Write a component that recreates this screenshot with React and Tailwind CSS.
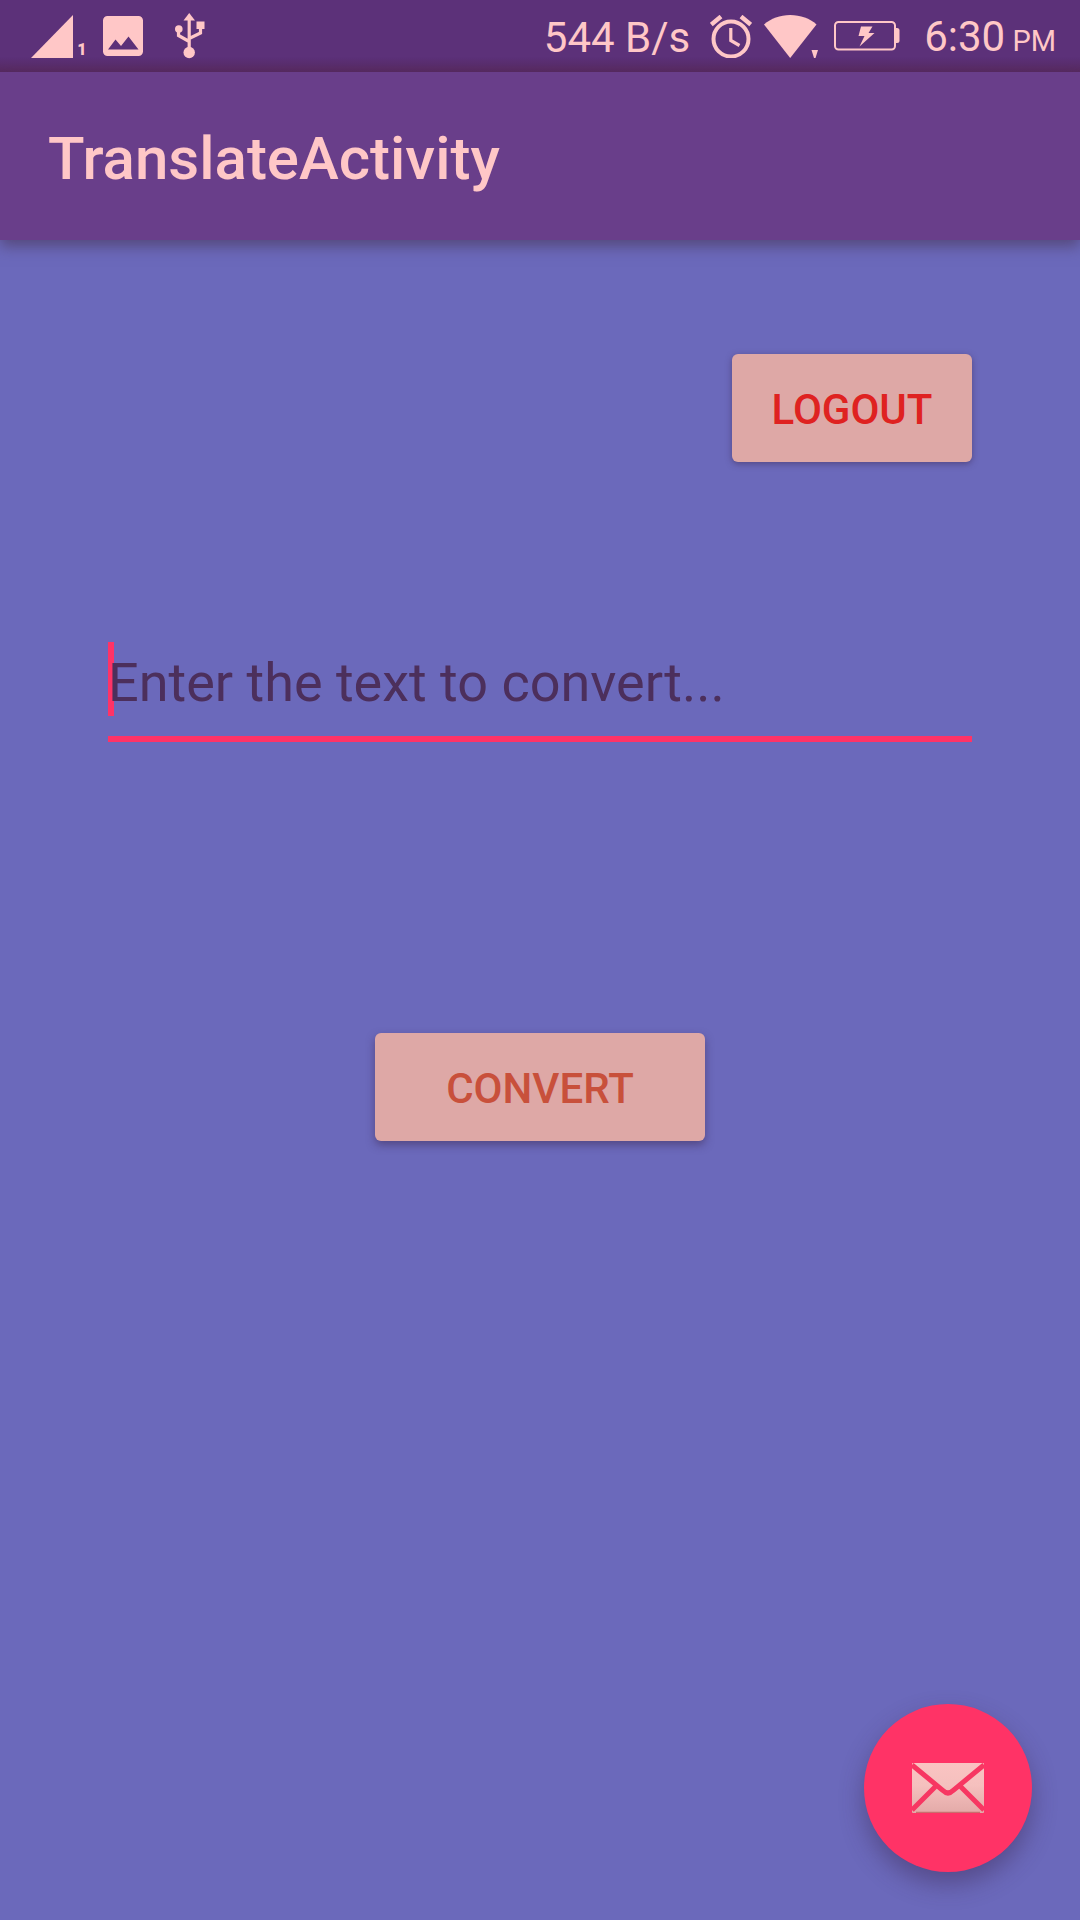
import React from "react";

function SignalIcon() {
  return (
    <svg className="h-[43px] w-[42px] shrink-0" viewBox="0 0 42 43" fill="currentColor" aria-hidden="true">
      <path d="M42 0V43H0Z" />
    </svg>
  );
}

function PictureIcon() {
  return (
    <svg className="h-10 w-10 shrink-0" viewBox="0 0 40 40" fill="currentColor" aria-hidden="true">
      <path
        fillRule="evenodd"
        d="M4.5 0h31A4.5 4.5 0 0 1 40 4.5v31a4.5 4.5 0 0 1-4.5 4.5h-31A4.5 4.5 0 0 1 0 35.500v-31A4.5 4.5 0 0 1 4.500 0ZM5 33.500H35.500L25.500 20.500L18 30L12.500 23.500Z"
      />
    </svg>
  );
}

function UsbIcon() {
  return (
    <svg className="h-[46px] w-[30px] shrink-0" viewBox="0 0 30 46" fill="none" stroke="currentColor" aria-hidden="true">
      <path d="M14.200 5V40M3.500 16V22.500L14.200 28.500M25.500 14V20L14.200 25.500" strokeWidth="3.200" />
      <g fill="currentColor" stroke="none">
        <path d="M14.200 0L20 7.500H8.500Z" />
        <circle cx="3.800" cy="16" r="3.800" />
        <rect x="21.500" y="8.500" width="8" height="7.500" />
        <circle cx="14.200" cy="39.500" r="5.700" />
      </g>
    </svg>
  );
}

function AlarmIcon() {
  return (
    <svg className="h-[43px] w-[42px] shrink-0" viewBox="0 0 42 43" fill="none" stroke="currentColor" aria-hidden="true">
      <circle cx="21" cy="24" r="17.500" strokeWidth="4" />
      <path d="M20.800 13V25.500L29.500 30.500" strokeWidth="3.200" />
      <path d="M1.300 9.500L11 1.500M31 1.500L40.700 9.500" strokeWidth="4.400" />
    </svg>
  );
}

function WifiIcon() {
  return (
    <svg className="h-[43px] w-[54px] shrink-0" viewBox="0 0 54 43" fill="currentColor" aria-hidden="true">
      <path d="M0 9.500C7 3.500 16 0 26.200 0S46 3.500 52.500 9.500L26.200 43Z" />
      <path d="M47.500 35H54L51.500 43H50Z" />
    </svg>
  );
}

function BatteryIcon() {
  return (
    <svg className="h-[30px] w-[66px] shrink-0" viewBox="0 0 66 30" fill="none" aria-hidden="true">
      <rect x="1" y="1" width="60" height="27.500" rx="3.500" stroke="currentColor" strokeWidth="2" />
      <path d="M61 7H63Q65.500 7 65.500 9.500V19.500Q65.500 22 63 22H61Z" fill="currentColor" />
      <path d="M27 5.500H38.500L34.500 12H40.500L25.500 25.500L30.500 15H24.500Z" fill="currentColor" />
    </svg>
  );
}

function MailIcon() {
  return (
    <svg className="h-[50px] w-[72px]" viewBox="0 0 72 50" aria-hidden="true">
      <defs>
        <linearGradient id="mail-fill" x1="0" y1="0" x2="0" y2="1">
          <stop offset="0" stopColor="#fac4c2" />
          <stop offset="0.45" stopColor="#f5c0be" />
          <stop offset="1" stopColor="#e3aaa8" />
        </linearGradient>
      </defs>
      <rect width="72" height="50" rx="1" fill="url(#mail-fill)" />
      <path d="M4 49.300H68" stroke="#c9706f" strokeWidth="1.200" />
      <path
        d="M0 2L31 27.500Q36 32.500 41 27.500L72 2M24 23L0 47M48 23L72 47"
        fill="none"
        stroke="#f73762"
        strokeWidth="5"
      />
    </svg>
  );
}

function StatusBar() {
  return (
    <div className="flex h-[72px] items-center justify-between bg-linear-to-b from-[#5c3179] from-80% to-[#572960] pr-6 pl-[31px]">
      <div className="flex items-center">
        <SignalIcon />
        <span className="mt-7 ml-1 w-[10px] text-center text-[16px] leading-4 font-black">1</span>
        <div className="ml-4 flex items-center gap-8">
          <PictureIcon />
          <UsbIcon />
        </div>
      </div>
      <div className="flex items-center text-[42px] leading-[72px]">
        <span className="mt-1">544 B/s</span>
        <div className="ml-5 flex items-center gap-3">
          <AlarmIcon />
          <WifiIcon />
        </div>
        <div className="ml-4">
          <BatteryIcon />
        </div>
        <span className="mt-1.5 ml-6">
          6:30<span className="text-[29px]"> PM</span>
        </span>
      </div>
    </div>
  );
}

export default function App() {
  return (
    <div className="flex min-h-screen flex-col bg-[#6b69bb] font-[Roboto,sans-serif] text-[#ffc7c7]">
      <StatusBar />
      <header className="flex h-[168px] items-center bg-[#693e8a] px-12 shadow-[0_6px_14px_rgba(70,50,80,0.6)]">
        <h1 className="mt-1.5 text-[60px] leading-[70px] font-medium">TranslateActivity</h1>
      </header>

      <main className="flex grow flex-col px-[108px] pt-[114px]">
        <button
          type="button"
          className="h-[108px] w-[240px] self-end rounded-md bg-[#dea8a6] pt-0.5 text-[42px] font-medium text-[#df2221] shadow-[0_2px_6px_rgba(60,40,80,0.5)]"
        >
          LOGOUT
        </button>

        <div className="relative mt-[180px] border-b-[6px] border-[#ff3366]">
          <span className="absolute top-0 left-0 h-[74px] w-[6px] bg-[#ff3366]" aria-hidden="true" />
          <input
            type="text"
            aria-label="Text to convert"
            placeholder="Enter the text to convert..."
            className="relative block h-[94px] w-full bg-transparent pb-3.5 text-[54px] text-[#4c2f5c] caret-transparent outline-none placeholder:text-[#4c2f5c]"
          />
        </div>

        <button
          type="button"
          className="mt-[291px] h-[108px] w-[330px] self-center rounded-md bg-[#dea8a6] pt-0.5 text-[42px] font-medium text-[#c8503b] shadow-[0_4px_8px_rgba(60,40,80,0.5)]"
        >
          CONVERT
        </button>
      </main>

      <footer className="flex justify-end p-12">
        <button
          type="button"
          aria-label="Send mail"
          className="flex size-[168px] items-center justify-center rounded-full bg-[#ff3366] shadow-[0_12px_24px_rgba(60,40,80,0.45)]"
        >
          <MailIcon />
        </button>
      </footer>
    </div>
  );
}
